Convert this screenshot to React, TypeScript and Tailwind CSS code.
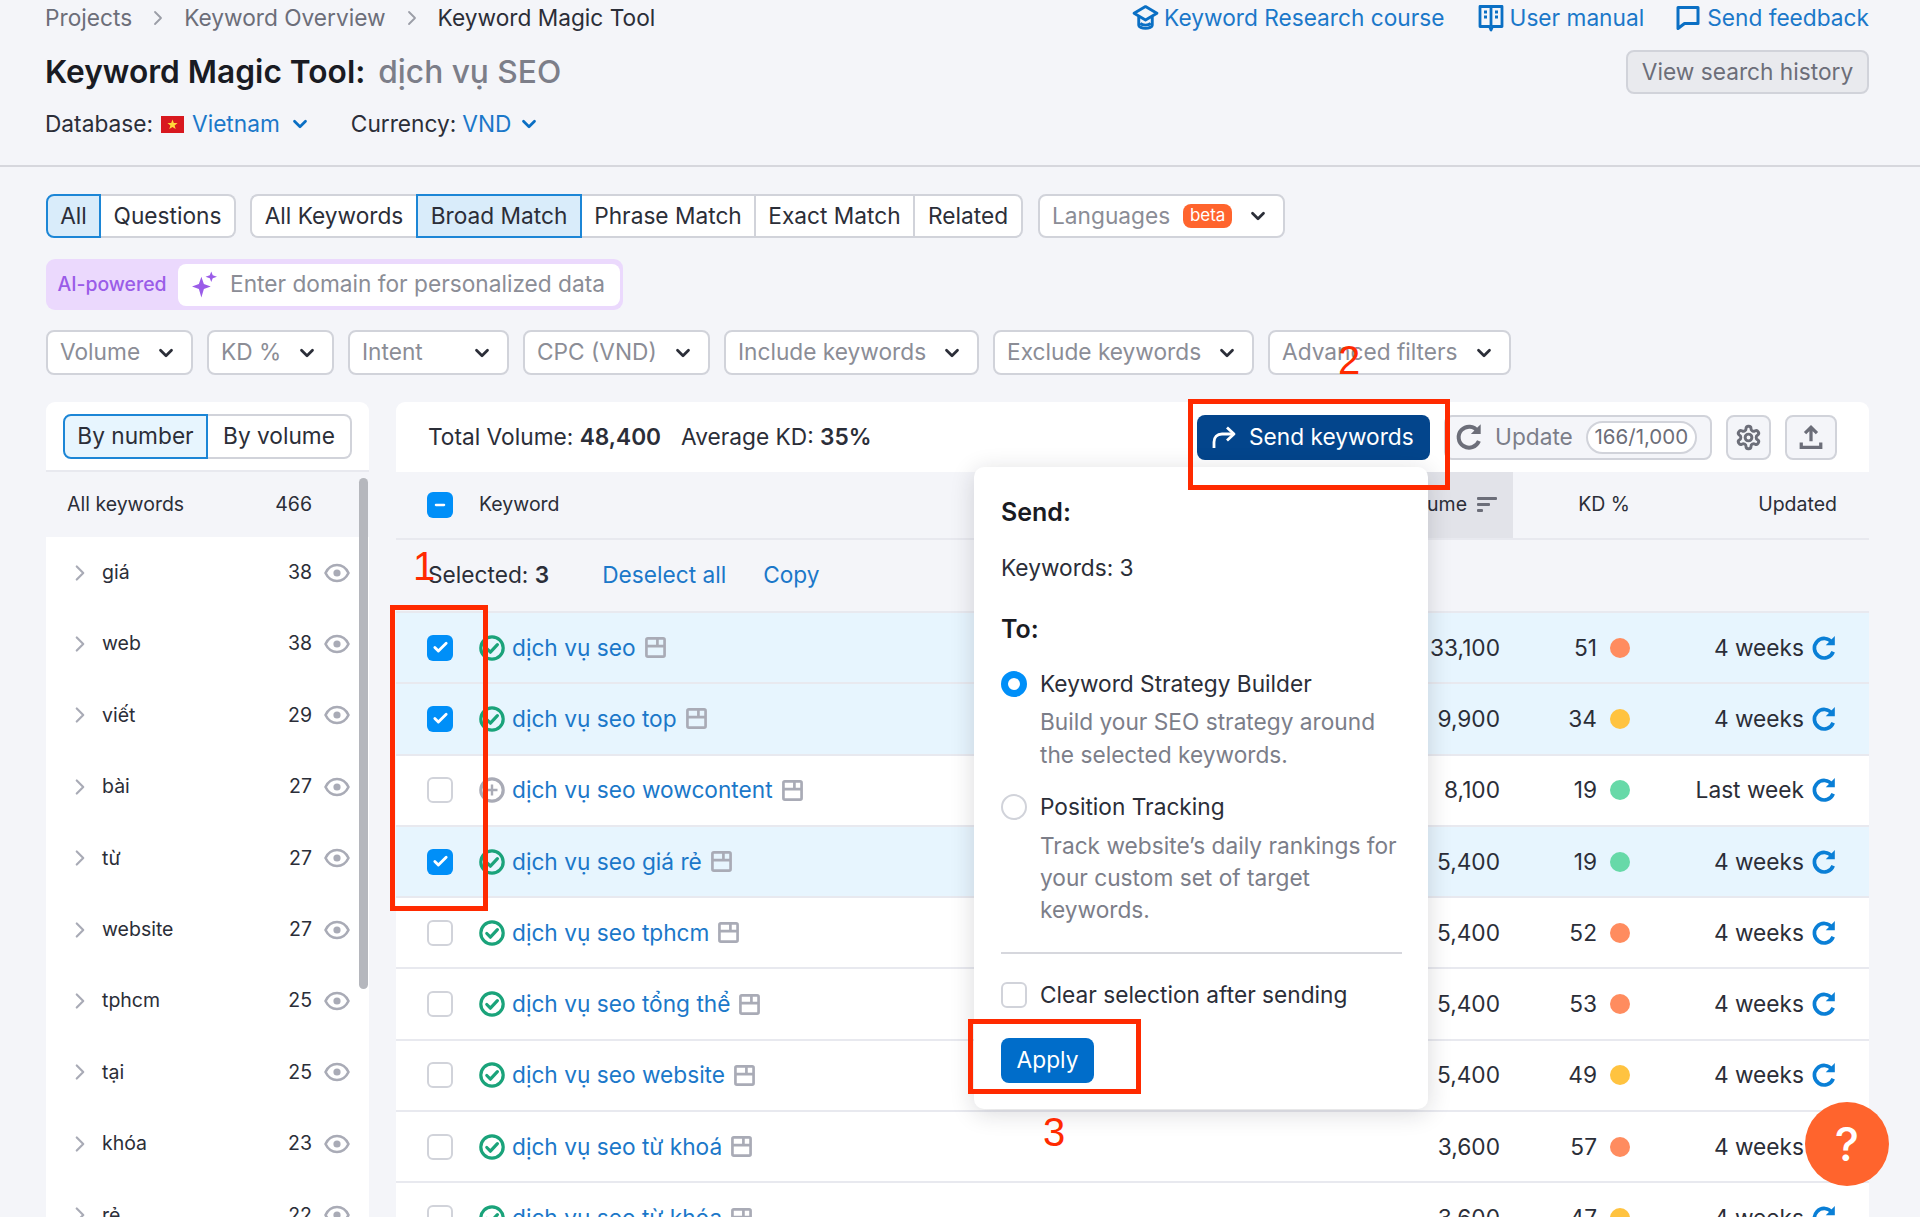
import { ChevronDown, ChevronRight, Check, Minus } from "lucide-react";

const SUB_GROUPS = [
  ["giá", "38"], ["web", "38"], ["viết", "29"], ["bài", "27"], ["từ", "27"],
  ["website", "27"], ["tphcm", "25"], ["tại", "25"], ["khóa", "23"], ["rẻ", "22"],
];

const KEYWORDS = [
  { name: "dịch vụ seo", vol: "33,100", kd: "51", dot: "bg-[#ff8c5f]", updated: "4 weeks", checked: true, intent: "check" },
  { name: "dịch vụ seo top", vol: "9,900", kd: "34", dot: "bg-[#ffc340]", updated: "4 weeks", checked: true, intent: "check" },
  { name: "dịch vụ seo wowcontent", vol: "8,100", kd: "19", dot: "bg-[#67d9a8]", updated: "Last week", checked: false, intent: "plus" },
  { name: "dịch vụ seo giá rẻ", vol: "5,400", kd: "19", dot: "bg-[#67d9a8]", updated: "4 weeks", checked: true, intent: "check" },
  { name: "dịch vụ seo tphcm", vol: "5,400", kd: "52", dot: "bg-[#ff8c5f]", updated: "4 weeks", checked: false, intent: "check" },
  { name: "dịch vụ seo tổng thể", vol: "5,400", kd: "53", dot: "bg-[#ff8c5f]", updated: "4 weeks", checked: false, intent: "check" },
  { name: "dịch vụ seo website", vol: "5,400", kd: "49", dot: "bg-[#ffc340]", updated: "4 weeks", checked: false, intent: "check" },
  { name: "dịch vụ seo từ khoá", vol: "3,600", kd: "57", dot: "bg-[#ff8c5f]", updated: "4 weeks", checked: false, intent: "check" },
  { name: "dịch vụ seo từ khóa", vol: "3,600", kd: "47", dot: "bg-[#ffc340]", updated: "4 weeks", checked: false, intent: "check" },
];

const FILTERS = [
  { label: "Volume", w: "w-[147px]" },
  { label: "KD %", w: "w-[127px]" },
  { label: "Intent", w: "w-[161px]" },
  { label: "CPC (VND)", w: "w-[187px]" },
  { label: "Include keywords", w: "w-[255px]" },
  { label: "Exclude keywords", w: "w-[261px]" },
  { label: "Advanced filters", w: "w-[243px]" },
];

const Refresh = ({ className }: { className: string }) => (
  <svg viewBox="0 0 24 24" fill="none" stroke="currentColor" strokeWidth="3.4" className={className}>
    <path d="M19.5 7A9 9 0 1 0 20.5 15.5" />
    <path d="M22 1v8.4h-8.4z" fill="currentColor" stroke="none" />
  </svg>
);

const EyeIcon = () => (
  <svg viewBox="0 0 26 26" fill="none" className="w-[26px] h-[26px] text-[#a9abb6]" stroke="currentColor" strokeWidth="2.6">
    <path d="M1.5 13C4 7.8 8 5 13 5s9 2.8 11.5 8C22 18.2 18 21 13 21S4 18.2 1.5 13z" strokeLinejoin="round" />
    <circle cx="13" cy="13" r="3.6" fill="currentColor" stroke="none" />
  </svg>
);

const SaveIcon = () => (
  <svg viewBox="0 0 22 22" fill="none" stroke="#a9abb6" strokeWidth="2.8" className="w-[21px] h-[21px] shrink-0">
    <rect x="1.5" y="1.5" width="19" height="19" rx="1.5" />
    <path d="M1.5 9.5h19M13 2v7" />
  </svg>
);

const IntentIcon = ({ kind }: { kind: string }) => (
  <svg viewBox="0 0 26 26" fill="none" strokeWidth="3.2" className="w-[26px] h-[26px] shrink-0" stroke={kind === "check" ? "#1aa37a" : "#a9abb6"}>
    <circle cx="13" cy="13" r="11.2" />
    {kind === "check" ? (
      <path d="M7.8 13.5l3.6 3.7 7-7.6" strokeLinecap="round" strokeLinejoin="round" />
    ) : (
      <path d="M13 7.5v11M7.5 13h11" strokeWidth="2.4" />
    )}
  </svg>
);

const Checkbox = ({ checked }: { checked: boolean }) =>
  checked ? (
    <div className="w-[26px] h-[26px] rounded-[6px] bg-[#008ff8] flex items-center justify-center shrink-0">
      <Check className="w-[17px] h-[17px] text-white" strokeWidth={4} />
    </div>
  ) : (
    <div className="w-[26px] h-[26px] rounded-[6px] bg-white border-2 border-[#d1d3da] shrink-0" />
  );

const App = () => {
  return (
    <div className="w-[1920px] h-[1219px] bg-white overflow-hidden font-['Inter',sans-serif] text-[22.7px] text-[#2b2e38]">
      <div className="relative h-[1217px] overflow-hidden bg-[#f4f5f9]">
        {/* Header */}
        <div className="h-[167px] border-b-2 border-[#d6d7dd] pl-[45px] pr-[51px]">
          <div className="h-9 flex items-center justify-between">
            <div className="flex items-center text-[#6c6e79]">
              <span>Projects</span>
              <ChevronRight className="w-[24px] h-[26px] mx-[14px] text-[#9b9da7]" strokeWidth={1.8} />
              <span>Keyword Overview</span>
              <ChevronRight className="w-[24px] h-[26px] mx-[14px] text-[#9b9da7]" strokeWidth={1.8} />
              <span className="text-[#2b2e38]">Keyword Magic Tool</span>
            </div>
            <div className="flex items-center text-[#1b78c9]">
              <svg viewBox="0 0 26 26" fill="none" stroke="currentColor" strokeWidth="2.8" className="w-[27px] h-[27px] mr-[5px] text-[#0a6fc4]">
                <path d="M13 2.5L24 9l-11 6.5L2 9z" strokeLinejoin="round" />
                <path d="M6.5 12v8.5c0 1.5 3 3 6.5 3s6.5-1.5 6.5-3V12" />
                <path d="M8 18.5c2 2.4 8 2.4 10 0" />
              </svg>
              <span>Keyword Research course</span>
              <svg viewBox="0 0 26 28" fill="none" stroke="currentColor" strokeWidth="2.8" className="w-[26px] h-[28px] ml-[33px] mr-[6px] text-[#0a6fc4]">
                <path d="M2 2.5h22v20H14.5L13 26l-1.5-3.5H2z" strokeLinejoin="round" />
                <path d="M13 3v19" />
                <path d="M6 8h3M6 13h3M17 8h3M17 13h3" strokeWidth="3" />
              </svg>
              <span>User manual</span>
              <svg viewBox="0 0 24 26" fill="none" stroke="currentColor" strokeWidth="3" className="w-[24px] h-[27px] ml-[32px] mr-[7px] text-[#0a6fc4]">
                <path d="M2 3h20v16H8.5L2 24z" strokeLinejoin="round" />
              </svg>
              <span>Send feedback</span>
            </div>
          </div>
          <div className="mt-[14px] h-[44px] flex items-center justify-between">
            <div className="flex items-center text-[31.7px] font-semibold">
              <span className="text-[#191b23]">Keyword Magic Tool:</span>
              <span className="ml-[13px] text-[#7c7e89] font-medium">dịch vụ SEO</span>
            </div>
            <div className="w-[243px] h-[44px] rounded-[8px] border-2 border-[#d1d3da] bg-[#e9eaee] flex items-center justify-center text-[#6c6e79]">
              View search history
            </div>
          </div>
          <div className="mt-3 h-9 flex items-center">
            <span>Database:</span>
            <svg viewBox="0 0 23 17" className="w-[23px] h-[17px] ml-[8px] mr-[8px]">
              <rect width="23" height="17" fill="#d8181f" />
              <path d="M11.5 3.5l1.3 3.6h3.8l-3 2.3 1.1 3.7-3.2-2.2-3.2 2.2 1.1-3.7-3-2.3h3.8z" fill="#ffd83a" />
            </svg>
            <span className="text-[#1b78c9]">Vietnam</span>
            <ChevronDown className="w-[22px] h-[22px] ml-[9px] text-[#0a6fc4]" strokeWidth={3} />
            <span className="ml-[40px]">Currency:</span>
            <span className="ml-[6px] text-[#1b78c9]">VND</span>
            <ChevronDown className="w-[22px] h-[22px] ml-[7px] text-[#0a6fc4]" strokeWidth={3} />
          </div>
        </div>

        {/* Match tabs */}
        <div className="pl-[46px] pt-[27px] flex items-center h-[71px]">
          <div className="flex h-[44px]">
            <div className="w-[55px] flex items-center justify-center rounded-l-[8px] border-2 border-[#1c86d6] bg-[#d9ecfa]">All</div>
            <div className="w-[135px] flex items-center justify-center rounded-r-[8px] border-2 border-l-0 border-[#d1d3da] bg-white">Questions</div>
          </div>
          <div className="flex h-[44px] ml-[14px]">
            <div className="w-[166px] flex items-center justify-center rounded-l-[8px] border-2 border-r-0 border-[#d1d3da] bg-white">All Keywords</div>
            <div className="w-[166px] flex items-center justify-center border-2 border-[#1c86d6] bg-[#d9ecfa]">Broad Match</div>
            <div className="w-[174px] flex items-center justify-center border-y-2 border-r-2 border-[#d1d3da] bg-white">Phrase Match</div>
            <div className="w-[159px] flex items-center justify-center border-y-2 border-r-2 border-[#d1d3da] bg-white">Exact Match</div>
            <div className="w-[108px] flex items-center justify-center rounded-r-[8px] border-y-2 border-r-2 border-[#d1d3da] bg-white">Related</div>
          </div>
          <div className="w-[247px] h-[44px] ml-[15px] pl-[12px] flex items-center rounded-[8px] border-2 border-[#d1d3da] bg-white text-[#8b8d96]">
            <span>Languages</span>
            <span className="ml-[13px] w-[49px] h-[24px] rounded-[8px] bg-[#ff642d] text-white text-[17px] leading-[23px] text-center">beta</span>
            <ChevronDown className="w-[22px] h-[22px] ml-[15px] text-[#2b2e38]" strokeWidth={3} />
          </div>
        </div>

        {/* AI domain box */}
        <div className="ml-[46px] mt-[21px] w-[577px] h-[51px] rounded-[9px] bg-[#ebd9fd] flex items-center">
          <span className="w-[132px] text-center text-[19.4px] font-medium text-[#9a5ce8]">AI-powered</span>
          <div className="w-[442px] h-[42px] rounded-[8px] bg-white flex items-center pl-[14px] text-[#8b8d96]">
            <svg viewBox="0 0 24 26" className="w-[25px] h-[28px] mr-[13px]" fill="#9a5ce8">
              <path d="M9 5l2.4 7.1L18 14.5l-6.6 2.4L9 25l-2.4-8.1L0 14.5l6.6-2.4z" />
              <path d="M18.5 0l1.4 3.6L24 5l-4.1 1.4L18.5 10l-1.4-3.6L13 5l4.1-1.4z" />
            </svg>
            <span>Enter domain for personalized data</span>
          </div>
        </div>

        {/* Filters */}
        <div className="ml-[46px] mt-[20px] h-[45px] flex gap-[14px]">
          {FILTERS.map(f => (
            <div key={f.label} className={`${f.w} flex items-center justify-between pl-[12px] pr-[14px] rounded-[8px] border-2 border-[#d1d3da] bg-white text-[#8b8d96]`}>
              <span className="whitespace-nowrap">{f.label}</span>
              <ChevronDown className="w-[22px] h-[22px] text-[#2b2e38] shrink-0" strokeWidth={3} />
            </div>
          ))}
        </div>

        {/* Panels */}
        <div className="mt-[27px] pl-[46px] flex gap-[27px]">
          {/* Groups */}
          <div className="relative w-[323px] bg-white rounded-t-[9px]">
            <div className="h-[70px] border-b-2 border-[#e8e9ef] pl-[17px] pt-[12px]">
              <div className="flex h-[45px] w-[289px]">
                <div className="w-[145px] flex items-center justify-center rounded-l-[8px] border-2 border-[#1c86d6] bg-[#e7f5fe]">By number</div>
                <div className="w-[144px] flex items-center justify-center rounded-r-[8px] border-2 border-l-0 border-[#d1d3da]">By volume</div>
              </div>
            </div>
            <div className="h-[65px] bg-[#f4f5f9] flex items-center pl-[21px] text-[19.5px]">
              <span>All keywords</span>
              <span className="ml-auto mr-[57px]">466</span>
            </div>
            {SUB_GROUPS.map(([word, count]) => (
              <div key={word} className="h-[71.4px] flex items-center text-[19.5px]">
                <ChevronRight className="w-[26px] h-[30px] ml-[21px] text-[#a9abb6]" strokeWidth={2} />
                <span className="ml-[9px]">{word}</span>
                <span className="ml-auto mr-[12px]">{count}</span>
                <div className="mr-[19px]"><EyeIcon /></div>
              </div>
            ))}
            <div className="absolute left-[313px] top-[76px] w-[9px] h-[511px] rounded-full bg-[#b5b7bd]" />
          </div>

          {/* Keyword table */}
          <div className="relative w-[1473px] bg-white rounded-t-[9px]">
            <div className="h-[70px] flex items-center pl-[32px]">
              <span>Total Volume: <b className="font-semibold">48,400</b></span>
              <span className="ml-[20px]">Average KD: <b className="font-semibold">35%</b></span>
              <div className="ml-auto w-[233px] h-[45px] rounded-[8px] bg-[#03458c] text-white flex items-center pl-[14px]">
                <svg viewBox="0 0 26 26" fill="none" stroke="currentColor" strokeWidth="2.8" className="w-[26px] h-[26px] mr-[12px]">
                  <path d="M3 24v-6c0-5 3-8 8-8h11" />
                  <path d="M16 3.5l7 6.5-7 6.5" strokeLinejoin="round" />
                </svg>
                <span>Send keywords</span>
              </div>
              <div className="ml-[14px] w-[268px] h-[45px] rounded-[8px] border-2 border-[#d1d3da] bg-[#f4f5f9] flex items-center pl-[9px] text-[#7c7e89]">
                <Refresh className="w-[28px] h-[28px] text-[#6c6e79]" />
                <span className="ml-[12px]">Update</span>
                <span className="ml-[13px] w-[111px] h-[33px] rounded-full border-2 border-[#d1d3da] bg-white flex items-center justify-center text-[20.5px] text-[#6c6e79]">166/1,000</span>
              </div>
              <div className="ml-[14px] w-[45px] h-[45px] rounded-[8px] border-2 border-[#d1d3da] bg-[#f4f5f9] flex items-center justify-center">
                <svg viewBox="0 0 24 24" fill="none" stroke="#6c6e79" strokeWidth="2.6" className="w-[27px] h-[27px]">
                  <path d="M12.22 2h-.44a2 2 0 0 0-2 2v.18a2 2 0 0 1-1 1.73l-.43.25a2 2 0 0 1-2 0l-.15-.08a2 2 0 0 0-2.73.73l-.22.38a2 2 0 0 0 .73 2.73l.15.1a2 2 0 0 1 1 1.72v.51a2 2 0 0 1-1 1.74l-.15.09a2 2 0 0 0-.73 2.73l.22.38a2 2 0 0 0 2.73.73l.15-.08a2 2 0 0 1 2 0l.43.25a2 2 0 0 1 1 1.73V20a2 2 0 0 0 2 2h.44a2 2 0 0 0 2-2v-.18a2 2 0 0 1 1-1.73l.43-.25a2 2 0 0 1 2 0l.15.08a2 2 0 0 0 2.73-.73l.22-.39a2 2 0 0 0-.73-2.73l-.15-.08a2 2 0 0 1-1-1.74v-.5a2 2 0 0 1 1-1.74l.15-.09a2 2 0 0 0 .73-2.73l-.22-.38a2 2 0 0 0-2.73-.73l-.15.08a2 2 0 0 1-2 0l-.43-.25a2 2 0 0 1-1-1.73V4a2 2 0 0 0-2-2z" />
                  <circle cx="12" cy="12" r="3" />
                </svg>
              </div>
              <div className="ml-[14px] mr-[32px] w-[52px] h-[45px] rounded-[8px] border-2 border-[#d1d3da] bg-[#f4f5f9] flex items-center justify-center">
                <svg viewBox="0 0 24 24" fill="none" stroke="#6c6e79" strokeWidth="3" className="w-[26px] h-[26px]">
                  <path d="M12 16V3M6.5 8.5L12 3l5.5 5.5" />
                  <path d="M3 17v4.5h18V17" />
                </svg>
              </div>
            </div>

            {/* Column heads */}
            <div className="h-[68px] bg-[#f4f5f9] border-b-2 border-[#e8e9ef] flex items-center text-[19.5px]">
              <div className="ml-[31px] w-[26px] h-[26px] rounded-[6px] bg-[#008ff8] flex items-center justify-center">
                <Minus className="w-[14px] h-[14px] text-white" strokeWidth={4} />
              </div>
              <span className="ml-[26px]">Keyword</span>
              <div className="ml-auto w-[150px] h-full bg-[#e2e3e9] flex items-center justify-end pr-[16px]">
                <span>Volume</span>
                <svg viewBox="0 0 20 16" fill="#6c6e79" className="w-[20px] h-[16px] ml-[10px]">
                  <rect width="20" height="3" rx="1" />
                  <rect y="6" width="13" height="3" rx="1" />
                  <rect y="12" width="6" height="3" rx="1" />
                </svg>
              </div>
              <div className="w-[117px] flex justify-end">KD %</div>
              <div className="w-[239px] flex justify-end pr-[32px]">Updated</div>
            </div>

            {/* Selection bar */}
            <div className="h-[73px] bg-[#f4f5f9] border-b-2 border-[#e8e9ef] flex items-center pl-[32px]">
              <span>Selected: <b className="font-semibold">3</b></span>
              <span className="ml-[53px] text-[#1b78c9]">Deselect all</span>
              <span className="ml-[37px] text-[#1b78c9]">Copy</span>
            </div>

            {/* Rows */}
            {KEYWORDS.map(k => (
              <div key={k.name} className={`h-[71.3px] border-b-2 border-[#e8e9ef] flex items-center ${k.checked ? "bg-[#e7f5fe]" : "bg-white"}`}>
                <div className="ml-[31px]"><Checkbox checked={k.checked} /></div>
                <div className="ml-[26px]"><IntentIcon kind={k.intent} /></div>
                <span className="ml-[7px] text-[#1b78c9]">{k.name}</span>
                <div className="ml-[9px]"><SaveIcon /></div>
                <div className="ml-auto w-[150px] text-right pr-[13px]">{k.vol}</div>
                <div className="w-[117px] flex items-center justify-end gap-[13px]">
                  <span>{k.kd}</span>
                  <span className={`w-[20px] h-[20px] rounded-full ${k.dot}`} />
                </div>
                <div className="w-[239px] flex items-center justify-end gap-[7px] pr-[32px]">
                  <span>{k.updated}</span>
                  <Refresh className="w-[26px] h-[26px] text-[#0a7fd6]" />
                </div>
              </div>
            ))}

            {/* Send popup */}
            <div className="absolute left-[578px] top-[65px] w-[454px] h-[642px] bg-white rounded-[10px] shadow-[0_4px_24px_rgba(25,27,35,0.16)] pl-[27px] pr-[26px]">
              <div className="mt-[29px] h-[34px] flex items-center text-[25px] font-semibold text-[#191b23]">Send:</div>
              <div className="mt-[21px] h-[34px] flex items-center">Keywords: 3</div>
              <div className="mt-[28px] h-[34px] flex items-center text-[25px] font-semibold text-[#191b23]">To:</div>
              <div className="mt-[20px] h-[34px] flex items-center">
                <span className="w-[26px] h-[26px] rounded-full border-[7px] border-[#008ff8] bg-white" />
                <span className="ml-[13px]">Keyword Strategy Builder</span>
              </div>
              <div className="ml-[39px] mt-[5px] leading-[32.5px] text-[#7c7e89]">
                Build your SEO strategy around<br />the selected keywords.
              </div>
              <div className="mt-[19px] h-[34px] flex items-center">
                <span className="w-[26px] h-[26px] rounded-full border-2 border-[#d1d3da] bg-white" />
                <span className="ml-[13px]">Position Tracking</span>
              </div>
              <div className="ml-[39px] mt-[6px] leading-[32px] text-[#7c7e89]">
                Track website’s daily rankings for<br />your custom set of target<br />keywords.
              </div>
              <div className="mt-[26px] h-[2px] bg-[#d6d7dd]" />
              <div className="mt-[24px] h-[34px] flex items-center">
                <Checkbox checked={false} />
                <span className="ml-[13px]">Clear selection after sending</span>
              </div>
              <div className="mt-[26px] w-[93px] h-[45px] rounded-[8px] bg-[#006dca] text-white flex items-center justify-center">Apply</div>
            </div>
          </div>
        </div>

        {/* Help bubble */}
        <div className="absolute left-[1805px] top-[1102px] w-[84px] h-[84px] rounded-full bg-[#ff642d] flex items-center justify-center text-white text-[46px] font-medium">?</div>

        {/* Tutorial annotations drawn on the screenshot */}
        <div className="absolute left-[390px] top-[605px] w-[98px] h-[306px] border-[5px] border-[#ff2a00]" />
        <div className="absolute left-[1188px] top-[399px] w-[262px] h-[91px] border-[5px] border-[#ff2a00]" />
        <div className="absolute left-[968px] top-[1019px] w-[173px] h-[75px] border-[5px] border-[#ff2a00]" />
        <span className="absolute left-[413px] top-[543px] font-['Liberation_Sans',sans-serif] text-[40px] leading-[46px] text-[#ff2a00]">1</span>
        <span className="absolute left-[1338px] top-[337px] font-['Liberation_Sans',sans-serif] text-[40px] leading-[46px] text-[#ff2a00]">2</span>
        <span className="absolute left-[1043px] top-[1109px] font-['Liberation_Sans',sans-serif] text-[40px] leading-[46px] text-[#ff2a00]">3</span>
      </div>
    </div>
  );
};

export default App;
